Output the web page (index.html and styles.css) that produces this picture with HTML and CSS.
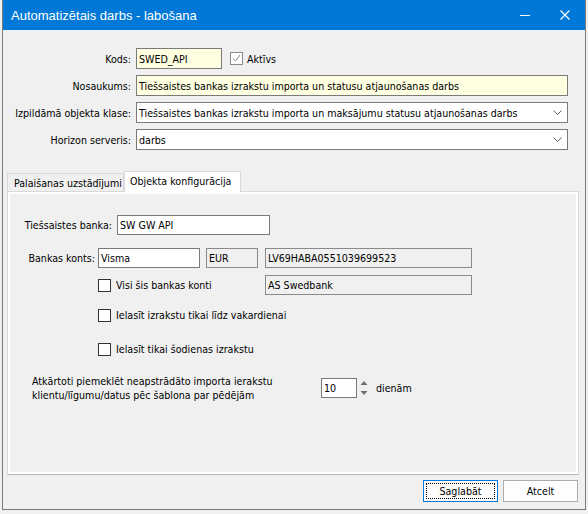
FILE: index.html
```html
<!DOCTYPE html>
<html lang="lv">
<head>
  <meta charset="UTF-8">
  <title>Automatizētais darbs - labošana</title>
  <link rel="stylesheet" href="styles.css">
</head>
<body>

<div class="window">
  <div class="titlebar">
    <span class="title">Automatizētais darbs - labošana</span>
    <span class="tb-btn">
      <svg width="10" height="10" viewBox="0 0 10 10"><line x1="0" y1="5.5" x2="10" y2="5.5" stroke="#fff" stroke-width="1"/></svg>
    </span>
    <span class="tb-btn">
      <svg width="10" height="10" viewBox="0 0 10 10"><path d="M0.5 0.5 L9.5 9.5 M9.5 0.5 L0.5 9.5" stroke="#fff" stroke-width="1.2" fill="none"/></svg>
    </span>
  </div>

  <div class="form">
    <span class="lbl">Kods:</span>
    <div class="field">
      <div class="edit yellow code">SWED_API</div>
      <span class="check checked"><svg width="11" height="11" viewBox="0 0 11 11"><path d="M2 5.5 L4.5 8 L9 2" stroke="#888" stroke-width="1" fill="none"/></svg></span>
      <span class="check-text">Aktīvs</span>
    </div>

    <span class="lbl">Nosaukums:</span>
    <div class="edit yellow">Tiešsaistes bankas izrakstu importa un statusu atjaunošanas darbs</div>

    <span class="lbl">Izpildāmā objekta klase:</span>
    <div class="edit combo">
      <span class="combo-text">Tiešsaistes bankas izrakstu importa un maksājumu statusu atjaunošanas darbs</span>
      <svg width="9" height="5" viewBox="0 0 9 5"><path d="M0.5 0.5 L4.5 4.5 L8.5 0.5" stroke="#606060" fill="none"/></svg>
    </div>

    <span class="lbl">Horizon serveris:</span>
    <div class="edit combo">
      <span class="combo-text">darbs</span>
      <svg width="9" height="5" viewBox="0 0 9 5"><path d="M0.5 0.5 L4.5 4.5 L8.5 0.5" stroke="#606060" fill="none"/></svg>
    </div>
  </div>

  <div class="tabs">
    <div class="tab">Palaišanas uzstādījumi</div>
    <div class="tab active">Objekta konfigurācija</div>
  </div>

  <div class="panel">
    <div class="panel-inner">
      <div class="prow r1">
        <span class="plbl w-bank">Tiešsaistes banka:</span>
        <div class="edit w153">SW GW API</div>
      </div>

      <div class="prow r2">
        <span class="plbl w-acc">Bankas konts:</span>
        <div class="edit w102">Visma</div>
        <div class="edit readonly w52 ml6">EUR</div>
        <div class="edit readonly w207 ml7">LV69HABA0551039699523</div>
      </div>

      <div class="prow r3 indent">
        <div class="check-item w167">
          <span class="check"></span>
          <span class="check-text">Visi šis bankas konti</span>
        </div>
        <div class="edit readonly w207">AS Swedbank</div>
      </div>

      <div class="prow r4 indent">
        <div class="check-item">
          <span class="check"></span>
          <span class="check-text">Ielasīt izrakstu tikai līdz vakardienai</span>
        </div>
      </div>

      <div class="prow r5 indent">
        <div class="check-item">
          <span class="check"></span>
          <span class="check-text">Ielasīt tikai šodienas izrakstu</span>
        </div>
      </div>

      <div class="prow r6">
        <div class="note">Atkārtoti piemeklēt neapstrādāto importa ierakstu<br>klientu/līgumu/datus pēc šablona par pēdējām</div>
        <div class="edit num">10</div>
        <svg class="spin" width="8" height="20" viewBox="0 0 8 20">
          <polygon points="4,3 7.5,7 0.5,7" fill="#6d6d6d"/>
          <polygon points="0.5,13 7.5,13 4,17" fill="#6d6d6d"/>
        </svg>
        <span class="days">dienām</span>
      </div>
    </div>
  </div>

  <div class="footer">
    <button class="btn default">Saglabāt</button>
    <button class="btn">Atcelt</button>
  </div>
</div>

</body>
</html>
```

FILE: styles.css
```css
* {
  box-sizing: border-box;
}
body {
  margin: 0;
  padding-left: 2px;
  background: #f0f0f0;
  font-family: "DejaVu Sans Condensed", "Liberation Sans", sans-serif;
  font-size: 10.6px;
  color: #000;
}
.window {
  width: 584px;
  height: 510px;
  border: 1px solid #7a7a7a;
  border-top: 0;
  background: #f0f0f0;
  display: flex;
  flex-direction: column;
}

/* заголовок окна */
.titlebar {
  height: 30px;
  background: #0078d7;
  color: #fff;
  display: flex;
  align-items: center;
  padding-left: 8px;
}
.title {
  flex: 1;
  font-family: "Liberation Sans", sans-serif;
  font-size: 13px;
}
.tb-btn {
  width: 40px;
  height: 30px;
  display: flex;
  align-items: center;
  justify-content: center;
}

/* верхняя форма */
.form {
  display: grid;
  grid-template-columns: 128px 1fr;
  column-gap: 5px;
  row-gap: 6px;
  padding: 18px 17px 0 0;
}
.lbl {
  text-align: right;
  align-self: center;
}
.field {
  display: flex;
  align-items: center;
}
.edit {
  height: 21px;
  border: 1px solid #7a7a7a;
  background: #fff;
  padding: 0 2px;
  display: flex;
  align-items: center;
  white-space: nowrap;
  overflow: hidden;
}
.yellow {
  background: #ffffe1;
}
.code {
  width: 86px;
}
.combo {
  justify-content: space-between;
  padding-right: 5px;
}
.readonly {
  background: #f0f0f0;
  border-color: #8a8a8a;
}

.check {
  width: 13px;
  height: 13px;
  border: 1px solid #333;
  background: #fff;
  display: inline-flex;
  align-items: center;
  justify-content: center;
  flex: none;
}
.check.checked {
  border-color: #8a8a8a;
  margin-left: 8px;
}
.check-text {
  margin-left: 4px;
}
.check-item {
  display: flex;
  align-items: center;
}
.check-item .check-text {
  margin-left: 5px;
}

/* вкладки */
.tabs {
  margin-top: 21px;
  padding-left: 4px;
  height: 20px;
  display: flex;
  align-items: flex-end;
}
.tab {
  width: 117px;
  height: 18px;
  border: 1px solid #d9d9d9;
  border-bottom: 0;
  background: #f0f0f0;
  padding: 1px 0 0 6px;
  display: flex;
  align-items: center;
  white-space: nowrap;
}
.tab.active {
  height: 21px;
  margin-bottom: -1px;
  padding: 0 0 2px 5px;
  background: #fff;
  position: relative;
  z-index: 1;
}
.panel {
  margin: 0 6px 0 4px;
  height: 284px;
  border: 1px solid #d9d9d9;
  border-bottom-color: #b5b5b5;
  padding: 2px;
  background: #fff;
}
.panel-inner {
  height: 100%;
  background: #f0f0f0;
  padding-top: 21px;
}
.prow {
  display: flex;
  align-items: center;
  height: 20px;
}
.prow .edit {
  height: 20px;
}
.plbl {
  text-align: right;
}
.w-bank {
  width: 102px;
  margin-right: 5px;
}
.w-acc {
  width: 85px;
  margin-right: 3px;
}
.w153 { width: 153px; }
.w102 { width: 102px; }
.w52 { width: 52px; }
.w207 { width: 207px; }
.w167 { width: 167px; }
.ml6 { margin-left: 6px; }
.ml7 { margin-left: 7px; }
.indent {
  padding-left: 88px;
}
.r2 { margin-top: 13px; }
.r3 { margin-top: 7px; }
.r4 { margin-top: 10px; }
.r5 { margin-top: 14px; }
.r6 {
  margin-top: 15px;
  height: 28px;
  padding-left: 22px;
}
.note {
  width: 289px;
  line-height: 14px;
}
.num {
  width: 36px;
}
.spin {
  margin-left: 3px;
}
.days {
  margin-left: 8px;
}

/* кнопки */
.footer {
  margin-top: 5px;
  padding-right: 7px;
  display: flex;
  justify-content: flex-end;
  gap: 5px;
}
.btn {
  width: 75px;
  height: 22px;
  border: 1px solid #adadad;
  background: #fdfdfd;
  font: inherit;
  color: #000;
  padding: 0;
}
.btn.default {
  border-color: #0078d7;
  outline: 1px dotted #000;
  outline-offset: -4px;
}
```
